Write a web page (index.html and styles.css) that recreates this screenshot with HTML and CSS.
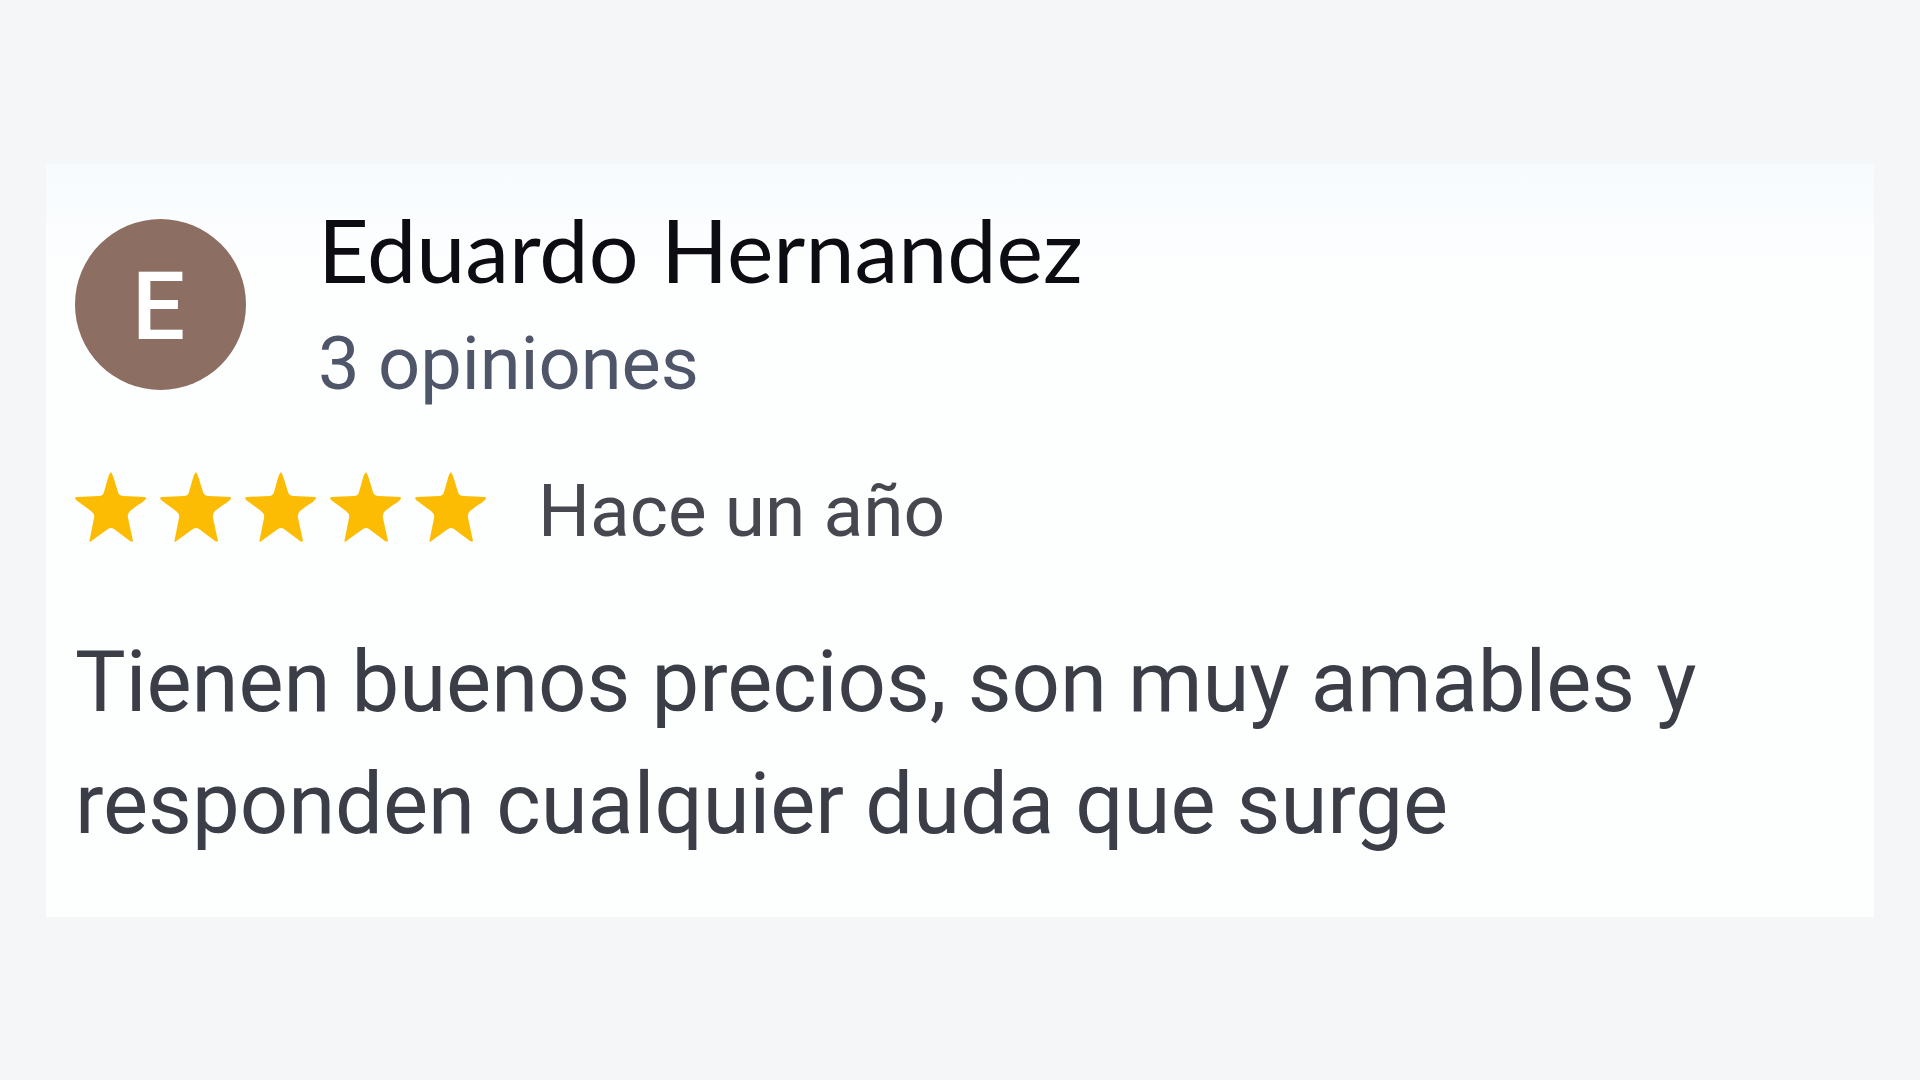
FILE: index.html
```html
<!DOCTYPE html>
<html lang="es">
<head>
<meta charset="utf-8">
<meta name="viewport" content="width=device-width, initial-scale=1">
<title>Opinión de Eduardo Hernandez</title>
<link rel="stylesheet" href="styles.css">
</head>
<body>
<main class="page">
  <article class="review">
    <header class="author">
      <div class="avatar" aria-hidden="true">E</div>
      <div class="identity">
        <h1 class="name">Eduardo Hernandez</h1>
        <p class="count">3 opiniones</p>
      </div>
    </header>
    <div class="rating">
      <svg class="stars" viewBox="0 0 412 70" role="img" aria-label="5 de 5 estrellas">
        <defs><path id="star" d="M36 0 Q38 3 39 7 L43 20 Q44 24 49 24 L70 25 Q72 26 70 28 Q67 31 63 33 L55 39 Q52 42 53 46 L58 69 Q57 70 55 69 L39 57 Q36 55 33 57 L15 70 Q14 70 15 66 L19 46 Q20 42 16 39 L1 28 Q-1 25 2 25 L24 24 Q28 24 29 20 L33 6 Q34 2 36 0 Z"/></defs>
        <use href="#star"/><use href="#star" x="85"/><use href="#star" x="170"/><use href="#star" x="255"/><use href="#star" x="340"/>
      </svg>
      <p class="date">Hace un año</p>
    </div>
    <p class="comment">Tienen buenos precios, son muy amables y responden cualquier duda que surge</p>
  </article>
</main>
</body>
</html>
```
FILE: styles.css
```css
* { box-sizing: border-box; margin: 0; }
body { background: #f4f6f8; font-family: Roboto, sans-serif; }
.page { min-height: 100vh; padding: 0 46px; display: flex; align-items: center; }
.review { width: 100%; padding: 33px 160px 52px 29px; background: linear-gradient(#f7fbfe, #fdfefe 100px); }
.author { display: flex; align-items: center; gap: 72px; }
.avatar { flex: none; width: 171px; height: 171px; padding: 6px 4px 0 0; border-radius: 50%; background: #8d6e63; color: #fff; font-size: 94px; font-weight: 500; display: grid; place-items: center; }
.name { font-family: Lato, sans-serif; font-size: 88px; line-height: 104px; font-weight: 400; color: #0c0c12; }
.count { margin-top: 15px; font-size: 74px; line-height: 96px; color: #50566a; }
.rating { display: flex; align-items: center; gap: 51px; margin-top: 43px; }
.stars { flex: none; width: 412px; height: 70px; fill: #fdbc04; }
.date { padding-top: 8px; font-size: 73px; line-height: 96px; color: #46474f; }
.comment { margin-top: 62px; font-size: 85px; line-height: 122px; color: #3b3d47; }
```
